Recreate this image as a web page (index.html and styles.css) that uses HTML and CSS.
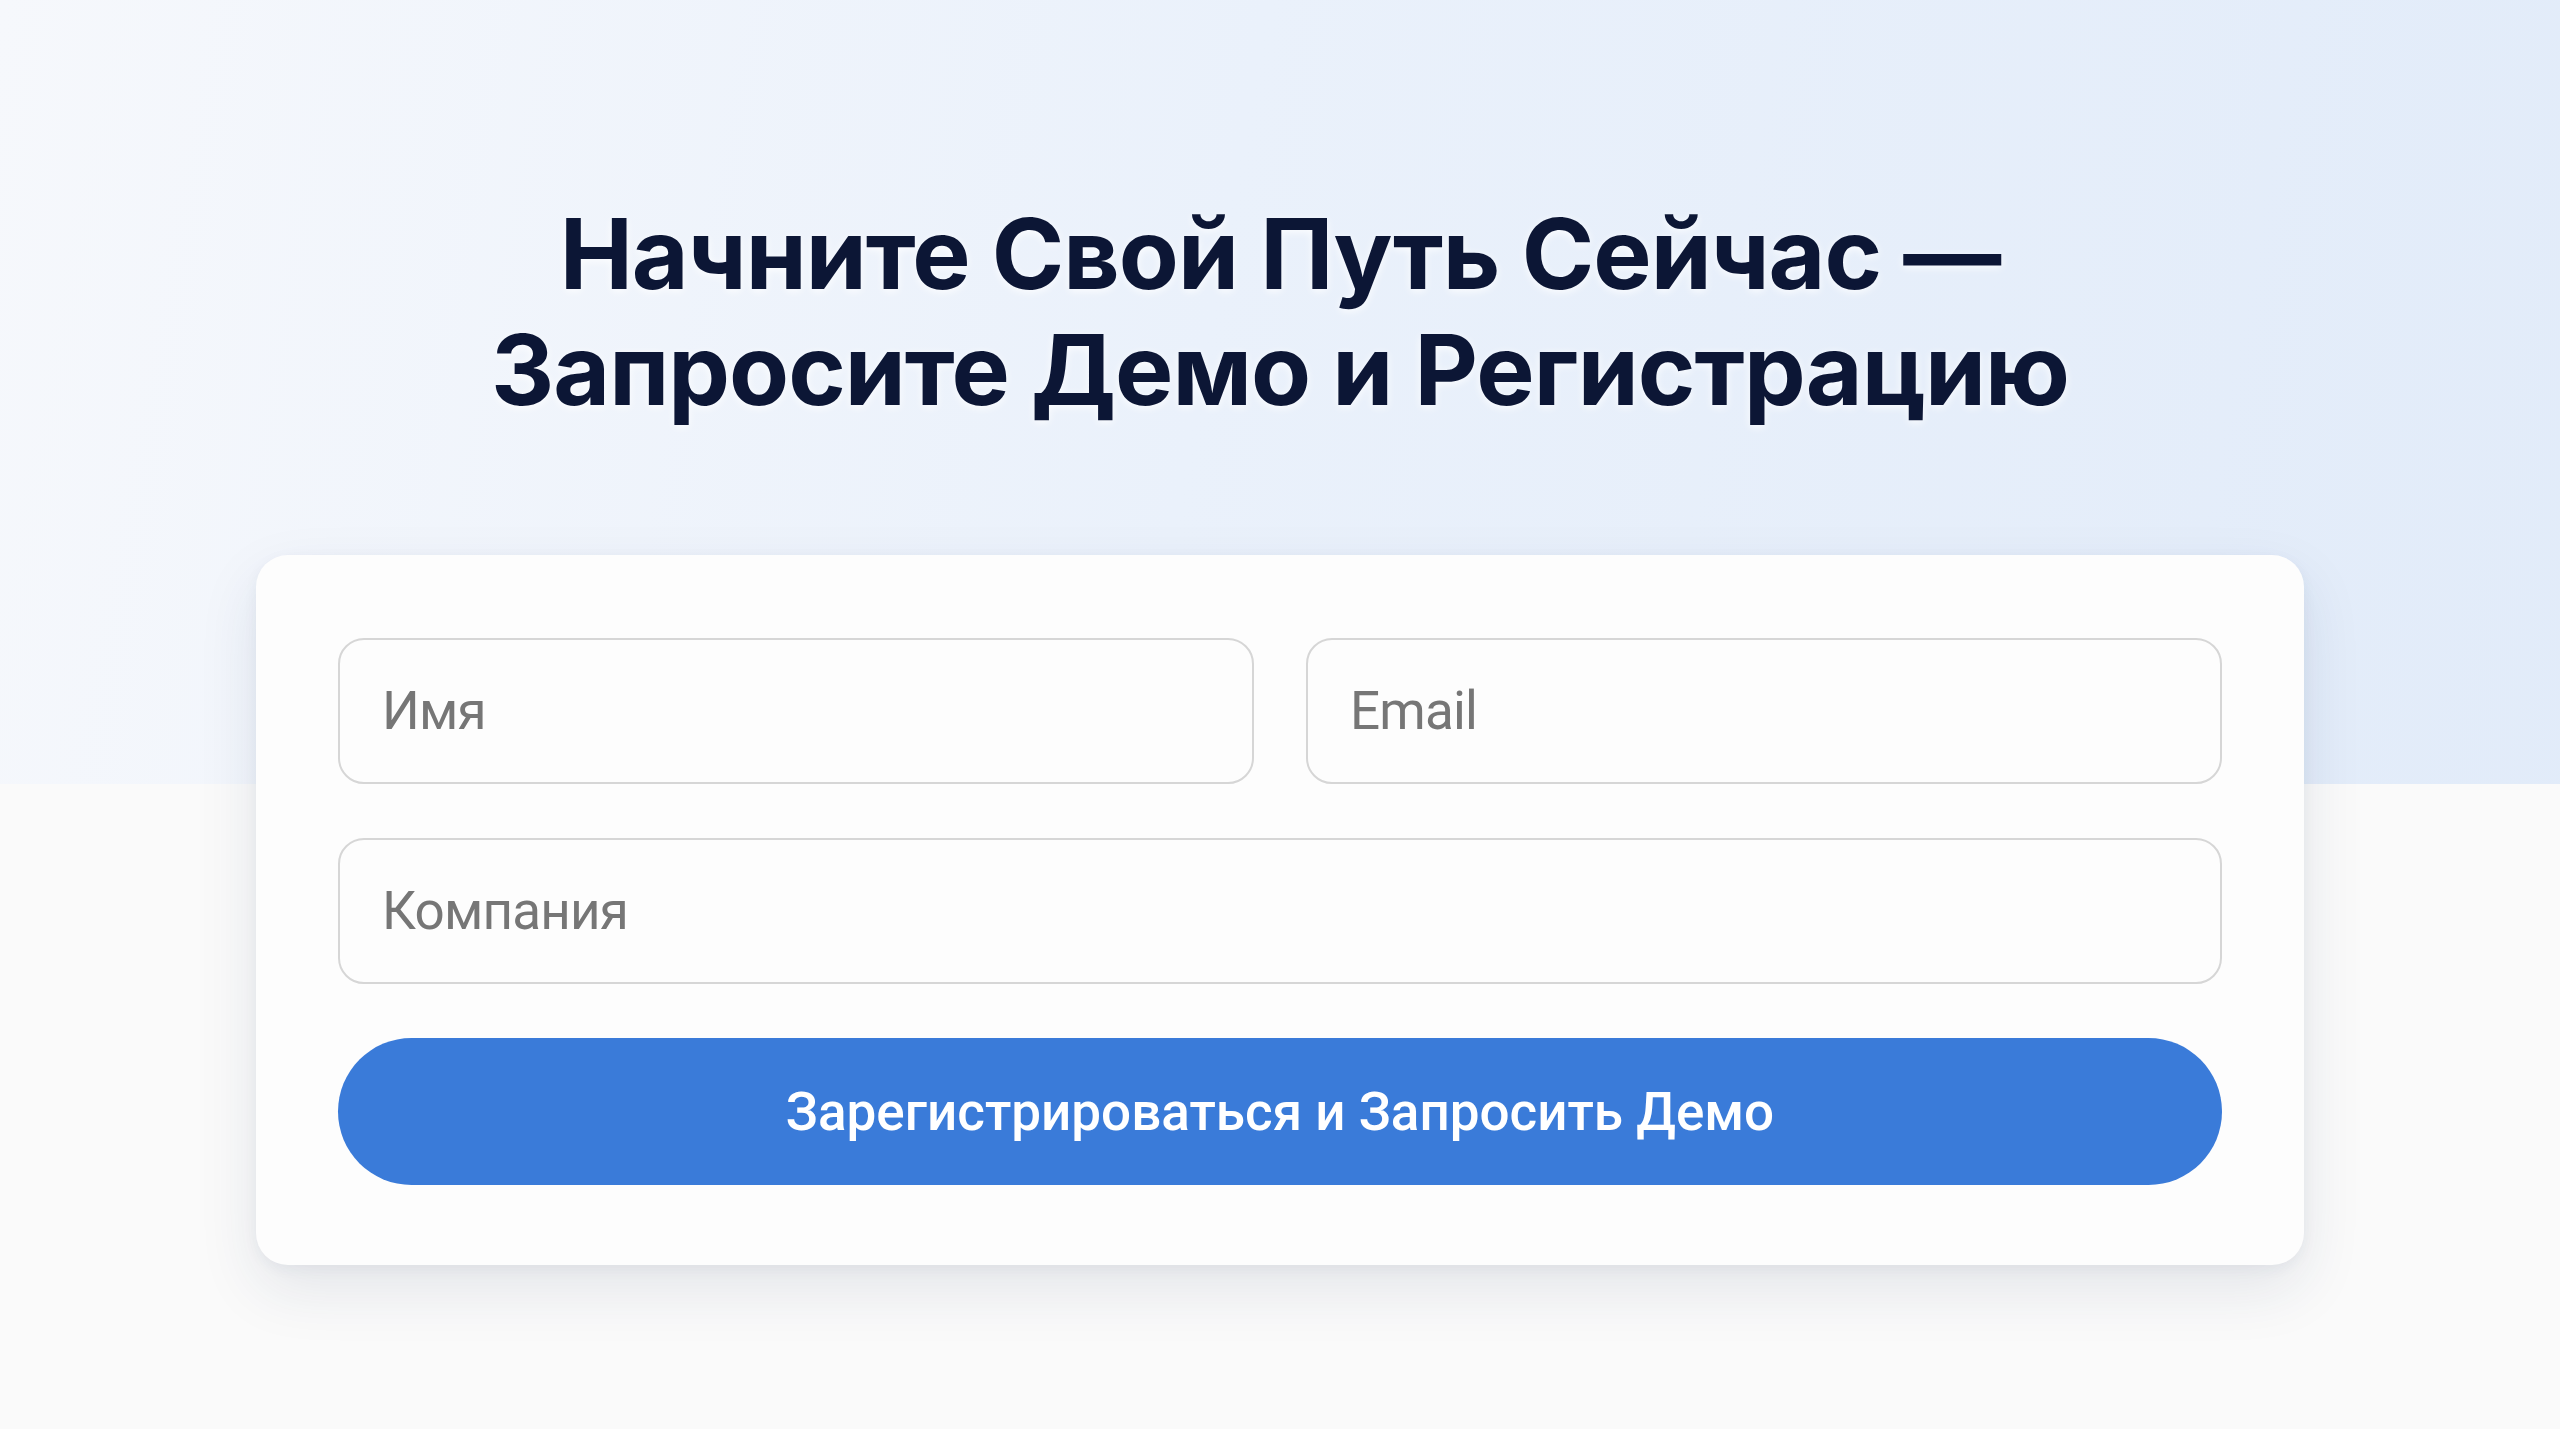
FILE: index.html
```html
<!DOCTYPE html>
<html lang="ru">
<head>
  <meta charset="UTF-8">
  <title>Запросить демо</title>
  <link rel="stylesheet" href="styles.css">
</head>
<body>

  <div class="page">
    <section class="hero">
      <h1>Начните Свой Путь Сейчас —<br>Запросите Демо и Регистрацию</h1>
    </section>

    <!-- Signup card -->
    <div class="card">
      <form class="signup-form" onsubmit="event.preventDefault();">
        <div class="row">
          <input type="text" placeholder="Имя">
          <input type="email" placeholder="Email">
        </div>
        <input type="text" placeholder="Компания">
        <button class="submit-button" type="submit">Зарегистрироваться и Запросить Демо</button>
      </form>
    </div>
  </div>

</body>
</html>
```

FILE: styles.css
```css
body {
  margin: 0;
  font-family: 'Roboto', 'Liberation Sans', sans-serif;
  background: #fafafa;
  overflow: hidden;
}

/* Light blue hero band on top, plain white below */
.page {
  min-height: 100vh;
  background:
    linear-gradient(to bottom, rgba(250, 250, 250, 0) 784px, #fafafa 784px),
    linear-gradient(100deg, #f6f8fc 0%, #eaf1fb 45%, #e1ebf9 100%);
  display: flex;
  flex-direction: column;
  align-items: center;
}

.hero {
  padding-top: 196px;
  height: 359px;
}

h1 {
  margin: 0;
  text-align: center;
  font-family: 'Inter', 'Liberation Sans', sans-serif;
  font-weight: 700;
  font-size: 98px;
  line-height: 116px;
  letter-spacing: -1px;
  color: #0c1635;
  text-shadow: 0 2px 8px rgba(255, 255, 255, 0.9);
}

/* Card with soft shadow */
.card {
  width: 2048px;
  box-sizing: border-box;
  padding: 83px 82px 80px;
  background: #fdfdfd;
  border-radius: 32px;
  box-shadow: 0 24px 60px rgba(30, 50, 90, 0.10), 0 4px 14px rgba(30, 50, 90, 0.05);
}

.signup-form {
  display: flex;
  flex-direction: column;
  gap: 54px;
}

.row {
  display: flex;
  gap: 52px;
}

.row input {
  flex: 1;
  min-width: 0;
}

input {
  height: 146px;
  box-sizing: border-box;
  padding: 0 42px;
  border: 2px solid #d6d6d6;
  border-radius: 26px;
  background: #fdfdfd;
  font-family: 'Roboto', sans-serif;
  font-size: 53px;
  letter-spacing: -0.8px;
  color: #333;
  outline: none;
}

input::placeholder {
  color: #767676;
}

button.submit-button {
  height: 147px;
  border: none;
  border-radius: 74px;
  background: #3a7bd9;
  color: #fff;
  font-family: 'Roboto', sans-serif;
  font-weight: 500;
  font-size: 53px;
  cursor: pointer;
}
```
